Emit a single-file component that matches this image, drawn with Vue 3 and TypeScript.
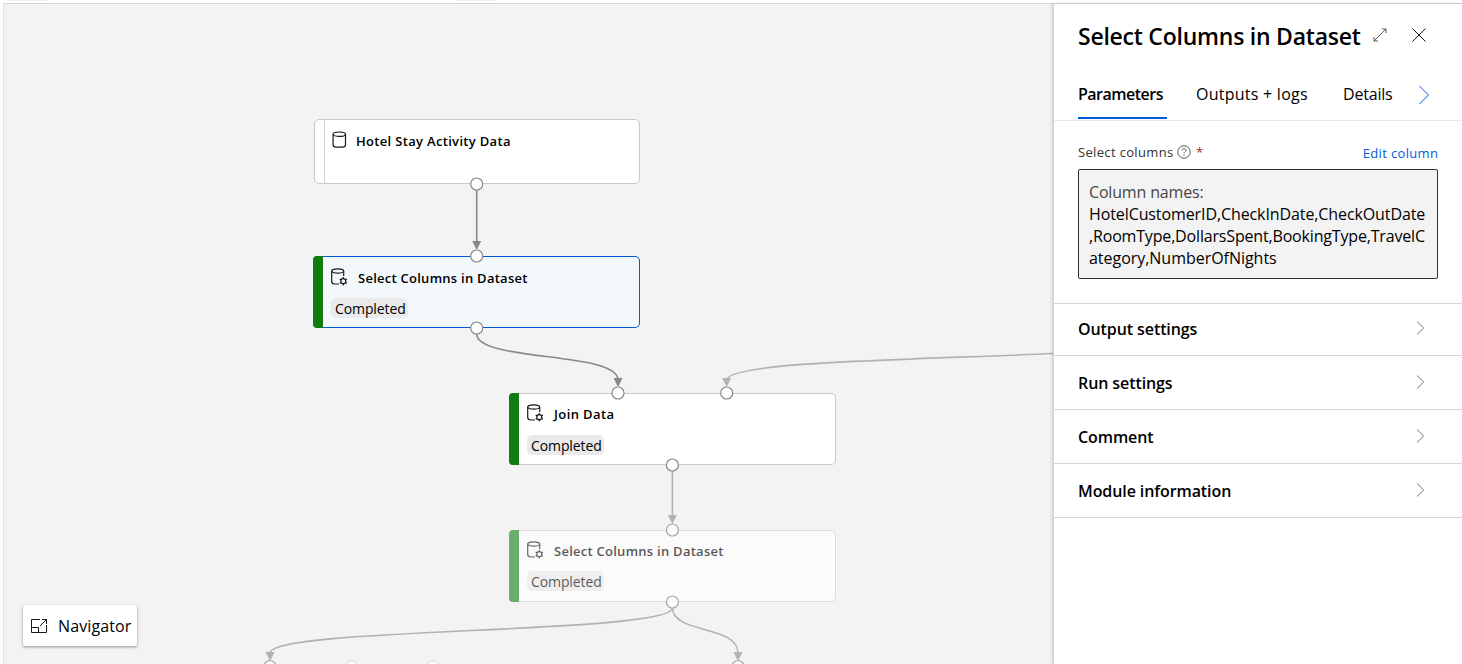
<script setup lang="ts">
interface FlowNode {
  id: string
  title: string
  kind: 'source' | 'module'
  state: string
  status?: string
}

interface Port {
  x: number
  y: number
  tone: string
}

const nodes: FlowNode[] = [
  { id: 'hotel', title: 'Hotel Stay Activity Data', kind: 'source', state: 'plain' },
  { id: 'select', title: 'Select Columns in Dataset', kind: 'module', state: 'selected', status: 'Completed' },
  { id: 'join', title: 'Join Data', kind: 'module', state: 'plain', status: 'Completed' },
  { id: 'select-next', title: 'Select Columns in Dataset', kind: 'module', state: 'faded', status: 'Completed' },
]

const ports: Port[] = [
  { x: 476.7, y: 184, tone: 'solid' },
  { x: 476.7, y: 256, tone: 'solid' },
  { x: 476.7, y: 328, tone: 'solid' },
  { x: 618, y: 393, tone: 'solid' },
  { x: 726.7, y: 393, tone: 'solid' },
  { x: 672.4, y: 465, tone: 'solid' },
  { x: 672.4, y: 530, tone: 'light' },
  { x: 672.4, y: 602, tone: 'light' },
  { x: 270, y: 666.5, tone: 'light' },
  { x: 351.5, y: 666.5, tone: 'faint' },
  { x: 433, y: 666.5, tone: 'faint' },
  { x: 738, y: 666.5, tone: 'light' },
]

const edges = [
  { d: 'M476.7 190V243', tip: [476.7, 250], tone: 'dark' },
  { d: 'M476.7 334C477 362 618 351 618 380', tip: [618, 387], tone: 'dark' },
  { d: 'M1054 353.5C900 360 727 362 726.7 380', tip: [726.7, 387], tone: 'pale' },
  { d: 'M672.4 471V516', tip: [672.4, 524], tone: 'pale' },
  { d: 'M672.4 608C672 634 270 627 270 653', tip: [270, 661], tone: 'pale' },
  { d: 'M672.4 608C673 634 738 625 738 653', tip: [738, 661], tone: 'pale' },
]

const sections = [
  { label: 'Output settings', id: 'output' },
  { label: 'Run settings', id: 'run' },
  { label: 'Comment', id: 'comment' },
  { label: 'Module information', id: 'module' },
]

const columnLines = [
  'HotelCustomerID,CheckInDate,CheckOutDate',
  ',RoomType,DollarsSpent,BookingType,TravelC',
  'ategory,NumberOfNights',
]
</script>

<template>
  <div class="designer">
    <div class="toolbar"><i class="stub one"></i><i class="stub two"></i></div>
    <div class="workspace">
      <main class="canvas"></main>
      <aside class="panel">
        <header class="head">
          <h1><span>Select Columns in Dataset</span></h1>
          <svg class="expand" width="14" height="14" viewBox="0 0 14 14"><path d="M1 13 13 1M9 1H13v4M1 9V13h4" /></svg>
          <svg class="close" width="16" height="16" viewBox="0 0 16 16"><path d="m1.500 1.500 13 13m0-13-13 13" /></svg>
        </header>
        <nav class="tabs">
          <span class="tab active">Parameters</span>
          <span class="tab outputs">Outputs + logs</span>
          <span class="tab details">Details</span>
          <svg width="12" height="20" viewBox="0 0 12 20"><path d="m1.500 1 9 9-9 9" /></svg>
        </nav>
        <section class="params">
          <div class="label-row">
            <span class="label">Select columns</span>
            <svg width="14" height="14" viewBox="0 0 14 14"><circle cx="7" cy="7" r="6.200" /><path d="M5 5.300C5.100 3 9 3.100 9 5.300 9 6.700 7 6.800 7 8.500M7 9.600v1.200" /></svg>
            <span class="star">*</span>
            <a class="edit">Edit column</a>
          </div>
          <div class="columns">
            <div class="caption">Column names:</div>
            <div v-for="(line, i) in columnLines" :key="i" :class="['line', 'l' + i]">{{ line }}</div>
          </div>
        </section>
        <div v-for="s in sections" :key="s.id" class="section" :class="s.id">
          <span>{{ s.label }}</span>
          <svg width="9" height="16" viewBox="0 0 9 16"><path d="m1 1.500 6.700 6.500L1 14.500" /></svg>
        </div>
      </aside>
    </div>

    <div v-for="n in nodes" :key="n.id" class="node" :class="[n.id, n.kind, n.state]">
      <div class="bar"></div>
      <div class="body">
        <div class="title">
          <svg v-if="n.kind === 'source'" class="icon" width="18" height="18" viewBox="0 0 18 18">
            <ellipse cx="8.300" cy="3.200" rx="6.200" ry="2.200" />
            <path d="M2.100 3.200v10.300q0 2.700 3 2.700h6.400q3 0 3-2.700V3.200" />
          </svg>
          <svg v-else class="icon" width="18" height="18" viewBox="0 0 18 18">
            <ellipse cx="6.700" cy="3" rx="6" ry="2.200" />
            <path d="M.7 3v10.300q0 2.700 3 2.700H8M12.700 3v5" />
            <circle cx="12.300" cy="13.200" r="2.500" />
            <path class="teeth" d="M12.300 10.700V9M12.300 15.700v1.700M10.100 12 8.700 11.100M14.500 14.400l1.400.9M10.100 14.400l-1.400.9M14.500 12l1.400-.9" />
          </svg>
          <span>{{ n.title }}</span>
        </div>
        <div v-if="n.status" class="status"><span>{{ n.status }}</span></div>
      </div>
    </div>

    <svg class="wires" width="1053" height="664" viewBox="0 0 1053 664">
      <g v-for="(e, i) in edges" :key="i" :class="e.tone">
        <path class="wire" :d="e.d" />
        <path class="tip" :d="`M${e.tip[0]} ${e.tip[1]}l-4.500-9h9z`" />
      </g>
      <circle v-for="(p, i) in ports" :key="i" :cx="p.x" :cy="p.y" r="6" :class="p.tone" />
    </svg>

    <button class="navigator">
      <svg width="18" height="16" viewBox="0 0 18 16"><path d="M10 1.500H1.500v13h15V7M1.500 9.500h7v5M10 8l6.500-6.500M12 1.500h4.500V6" /></svg>
      <span>Navigator</span>
    </button>
  </div>
</template>

<style>
body { margin: 0; background: #fff; }
</style>

<style scoped>
* { box-sizing: border-box; }
.designer {
  position: relative;
  width: 1462px;
  height: 664px;
  overflow: hidden;
  background: #fff;
  font-family: "Open Sans", "Noto Sans", sans-serif;
  color: #000;
  white-space: nowrap;
}
svg { flex: none; fill: none; stroke: #1b1a19; stroke-width: 1; }
.toolbar { height: 4px; border-bottom: 1px solid #d6d6d6; margin-left: 3px; display: flex; align-items: flex-start; }
.stub { height: 1px; width: 38px; background: #eee; }
.one { margin-left: 6px; }
.two { margin-left: 410px; }
.workspace { display: flex; height: 660px; }
.canvas { flex: 1; margin-left: 3px; border-left: 1px solid #e1e1e1; background: #f3f3f3; }
.panel { position: relative; width: 409px; background: #fff; border-left: 1px solid #d4d4d4; box-shadow: -1px 0 3px rgba(0, 0, 0, .16); z-index: 3; }
.head { height: 64px; padding-left: 24px; display: flex; align-items: center; }
h1 { width: 295px; margin: 0; font-size: 23px; line-height: 32px; font-weight: 600; letter-spacing: -.24px; }
.expand { stroke: #484644; stroke-width: .9; margin-top: -2px; }
.close { margin-left: 24px; margin-top: -2px; }
.tabs { height: 53px; border-bottom: 1px solid #e8e8e8; padding-left: 24px; display: flex; align-items: flex-start; font-size: 16px; line-height: 22px; }
.tab { padding-top: 15px; height: 51px; letter-spacing: -.2px; }
.active { width: 89px; font-weight: 600; letter-spacing: -.5px; border-bottom: 2px solid #015cda; }
.outputs { margin-left: 29px; width: 147px; letter-spacing: .25px; }
.details { width: 75px; }
.tabs svg { stroke: #015cda; margin-top: 17px; }
.params { height: 182px; padding: 21px 24px 0; }
.label-row { height: 27px; display: flex; align-items: flex-start; font-size: 13px; line-height: 20px; letter-spacing: .34px; color: #323130; }
.label { width: 99px; }
.label-row svg { margin-top: 3px; stroke: #444; stroke-width: .9; }
.star { margin-left: 5px; color: #a4262c; }
.edit { margin: 1px -.3px 0 auto; color: #015cda; }
.columns { height: 110px; border: 1px solid #323130; border-radius: 2px; background: #f3f3f3; padding: 11px 10px; font-size: 16px; line-height: 22px; letter-spacing: -.1px; }
.caption { color: #484644; letter-spacing: -.17px; }
.l1 { letter-spacing: -.17px; }
.l2 { letter-spacing: -.03px; }
.section { height: 54px; border-top: 1px solid #d6d6d6; padding: 0 37px 0 24px; display: flex; align-items: center; justify-content: space-between; font-size: 16px; font-weight: 600; letter-spacing: -.09px; }
.section.output { height: 52px; padding-bottom: 2px; }
.section.module { height: 55px; border-bottom: 1px solid #d6d6d6; }
.section svg { stroke: #72777d; margin-top: -2px; }
.section.output svg { margin-top: -1px; }
.node { position: absolute; width: 326px; height: 72px; border: 1px solid #c8c8c8; border-radius: 5px; background: #fff; display: flex; }
.hotel { left: 314px; top: 119px; height: 65px; }
.select { left: 313px; top: 256px; width: 327px; }
.join { left: 509px; top: 393px; width: 327px; }
.select-next { left: 509px; top: 530px; width: 327px; }
.bar { width: 10px; border-right: 1px solid #d0d0d0; }
.module { border-left: 0; }
.module .bar { margin: -1px 0; background: #107c10; border: 0; border-radius: 4px 0 0 4px; }
.selected { background: #f3f8fd; border-color: #015cda; }
.faded { border-color: #dcdcdc; background: #fbfbfb; }
.faded .bar { background: #6bad6b; }
.faded .body { opacity: .65; }
.body { padding: 11px 0 0 8px; }
.title { display: flex; align-items: center; height: 20px; font-size: 13px; font-weight: 600; letter-spacing: .26px; }
.icon { margin-right: 9px; margin-top: -2px; stroke-width: 1.200; }
.hotel .body { padding: 10px 0 0 7px; }
.hotel .title { padding-top: 1px; letter-spacing: .32px; }
.source .icon { margin-left: -1px; margin-right: 7px; }
.join .body, .select-next .body { padding-top: 10px; }
.join .title { letter-spacing: .4px; }
.status { width: 77px; height: 20px; margin-top: 10px; border-radius: 5px; background: #eaeaea; padding-left: 4px; font-size: 14px; line-height: 21px; letter-spacing: -.1px; }
.join .status { margin-top: 11px; }
.wires { position: absolute; left: 0; top: 0; pointer-events: none; z-index: 1; }
.wire { stroke-width: 1.600; }
.tip { stroke: none; }
.dark .wire { stroke: #8a8886; }
.dark .tip { fill: #8a8886; }
.pale .wire { stroke: #b3b2b0; }
.pale .tip { fill: #b3b2b0; }
circle.solid { fill: #fff; stroke: #8a8886; stroke-width: 1.200; }
circle.light { fill: #fbfbfb; stroke: #aaa9a8; stroke-width: 1.200; }
circle.faint { fill: #fbfbfb; stroke: #d5d5d5; }
.navigator { position: absolute; left: 23px; top: 605px; width: 114px; height: 41px; padding: 0 0 0 7px; border: 0; border-radius: 2px; background: #fff; box-shadow: 0 1px 3px rgba(0, 0, 0, .4); display: flex; align-items: center; gap: 10px; font: 16px "Open Sans", sans-serif; color: #000; letter-spacing: .12px; }
</style>
